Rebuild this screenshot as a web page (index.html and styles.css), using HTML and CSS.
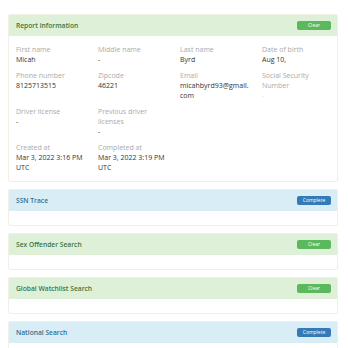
FILE: index.html
```html
<!DOCTYPE html>
<html lang="en">
<head>
    <meta charset="UTF-8">
    <meta name="viewport" content="width=device-width, initial-scale=1.0">
    <title>Report</title>
    <link rel="stylesheet" href="styles.css">
</head>
<body>
    <div class="panel success">
        <div class="panel-heading"><span>Report information</span> <span class="label clear">Clear</span></div>
        <div class="panel-body info">
            <div class="field"><div class="name">First name</div><div class="value">Micah</div></div>
            <div class="field"><div class="name">Middle name</div><div class="value">-</div></div>
            <div class="field"><div class="name">Last name</div><div class="value">Byrd</div></div>
            <div class="field"><div class="name">Date of birth</div><div class="value">Aug 10,</div></div>

            <div class="field"><div class="name">Phone number</div><div class="value">8125713515</div></div>
            <div class="field"><div class="name">Zipcode</div><div class="value">46221</div></div>
            <div class="field"><div class="name">Email</div><div class="value">micahbyrd93@gmail.<br>com</div></div>
            <div class="field"><div class="name">Social Security Number</div><div class="value faint">-</div></div>

            <div class="field"><div class="name">Driver license</div><div class="value">-</div></div>
            <div class="field"><div class="name">Previous driver licenses</div><div class="value">-</div></div>
            <div class="field"></div>
            <div class="field"></div>

            <div class="field"><div class="name">Created at</div><div class="value">Mar 3, 2022 3:16 PM UTC</div></div>
            <div class="field"><div class="name">Completed at</div><div class="value">Mar 3, 2022 3:19 PM UTC</div></div>
        </div>
    </div>

    <div class="panel info-panel">
        <div class="panel-heading"><span>SSN Trace</span> <span class="label complete">Complete</span></div>
        <div class="panel-body"></div>
    </div>

    <div class="panel success">
        <div class="panel-heading"><span>Sex Offender Search</span> <span class="label clear">Clear</span></div>
        <div class="panel-body"></div>
    </div>

    <div class="panel success">
        <div class="panel-heading"><span>Global Watchlist Search</span> <span class="label clear">Clear</span></div>
        <div class="panel-body"></div>
    </div>

    <div class="panel info-panel">
        <div class="panel-heading"><span>National Search</span> <span class="label complete">Complete</span></div>
        <div class="panel-body"></div>
    </div>
</body>
</html>
```

FILE: styles.css
```css
body {
    margin: 0;
    padding: 14px 10px 0 8px;
    background-color: #fff;
    color: #333;
    font-family: "Open Sans", Arial, sans-serif;
    font-size: 7px;
    line-height: 10px;
}
.panel {
    border: 1px solid #f2efe6;
    border-radius: 2px;
    margin-bottom: 7px;
}
.panel-heading {
    height: 21px;
    padding: 0 6px 0 7px;
    display: flex;
    align-items: center;
    justify-content: space-between;
    font-weight: 600;
    font-size: 6.7px;
}
.success .panel-heading {
    background-color: #dff0d8;
    color: #3c763d;
}
.info-panel .panel-heading {
    background-color: #d9edf7;
    color: #31708f;
}
.panel-body {
    height: 14px;
}
.info {
    height: auto;
    padding: 9px 7px 8px;
    display: grid;
    grid-template-columns: repeat(4, 82px);
    row-gap: 6px;
}
.field {
    padding-right: 12px;
}
.name {
    color: #aaa;
}
.value {
    color: #333;
}
.value.faint {
    color: #e4e4e4;
}
.label {
    width: 34px;
    height: 9px;
    border-radius: 2px;
    color: #fff;
    font-weight: normal;
    font-size: 5px;
    line-height: 9px;
    text-align: center;
}
.clear { background-color: #5cb85c; }
.complete { background-color: #337ab7; }
```
